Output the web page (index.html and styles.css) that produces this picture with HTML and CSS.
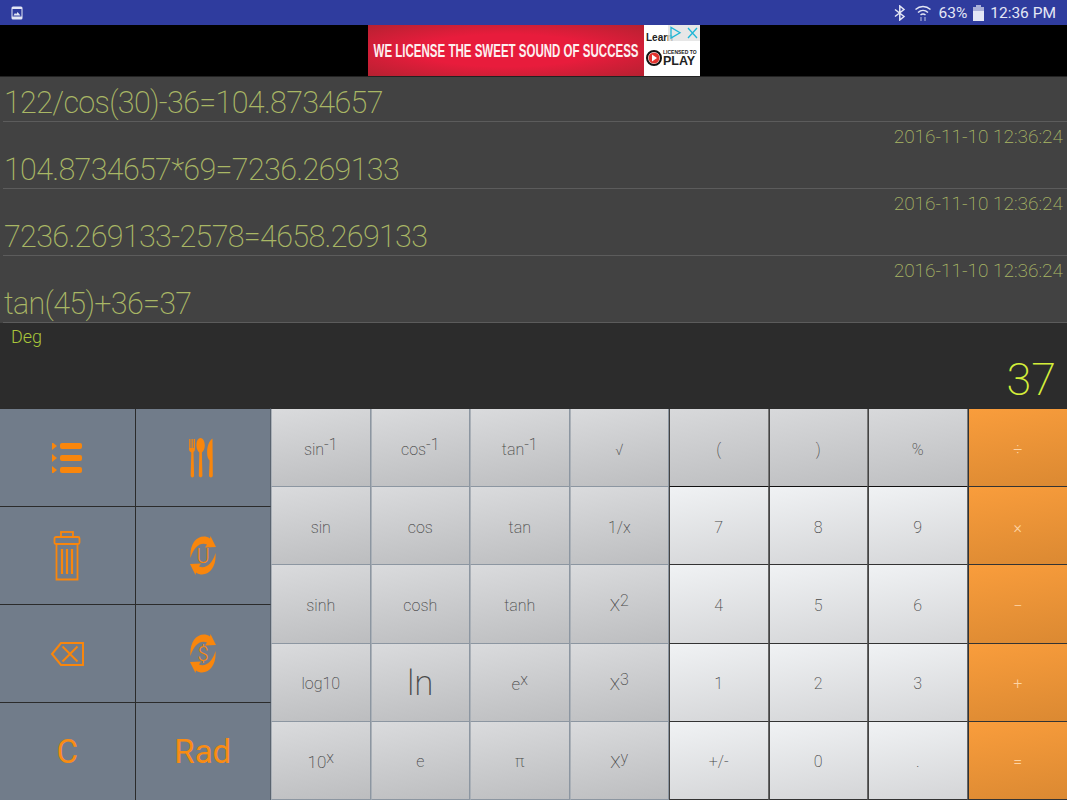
FILE: index.html
```html
<!DOCTYPE html>
<html lang="en">

<head>
    <meta charset="UTF-8">
    <title>Calculator</title>
    <link rel="stylesheet" href="styles.css">
</head>

<body>
    <div id="container">
        <header class="status">
            <svg class="status_pic" width="12" height="14" viewBox="0 0 12 14">
                <rect x="0.5" y="0.5" width="11" height="13" rx="1.5" fill="#e4e7f5"/>
                <rect x="1.5" y="3" width="9" height="7.5" fill="#2f3c9e"/>
                <path d="M2.5 9.5l1.5-2.5 1.2 1.2L6.5 6l3 3.5z" fill="#e4e7f5"/>
            </svg>
            <div class="status_right">
                <svg width="12" height="16" viewBox="0 0 12 16" fill="none" stroke="#e4e7f5" stroke-width="1.5">
                    <path d="M1 4.500l9 7-4.200 3.500v-14l4.200 3.500-9 7"/>
                </svg>
                <svg class="wifi" width="18" height="18" viewBox="0 0 18 18" fill="none" stroke="#e4e7f5" stroke-width="1.5">
                    <path d="M1.500 5.500c4.500-4 10.500-4 15 0M4 8.500c3-2.700 7-2.700 10 0M6.500 11c1.500-1.200 3.500-1.200 5 0"/>
                    <path d="M7 17v-4M11 17v-4" stroke="#8f96cc"/>
                </svg>
                <span class="pct">63%</span>
                <svg width="11" height="16" viewBox="0 0 11 16">
                    <rect x="3" y="0" width="5" height="2" fill="#aab0d8"/>
                    <rect x="0" y="2" width="11" height="5" fill="#aab0d8"/>
                    <rect x="0" y="6" width="11" height="10" fill="#e4e7f5"/>
                </svg>
                <span class="clock">12:36 PM</span>
            </div>
        </header>

        <section class="ad_bar">
            <div class="ad">
                <div class="ad_red"><span>WE LICENSE THE SWEET SOUND OF SUCCESS</span></div>
                <div class="ad_white">
                    <div class="ad_learn">Learn</div>
                    <div class="ad_logo">
                        <svg width="16" height="16" viewBox="0 0 16 16">
                            <circle cx="8" cy="8" r="7" fill="#fff" stroke="#111" stroke-width="2"/>
                            <circle cx="8" cy="8" r="5.500" fill="#e3342f"/>
                            <path d="M6 4.500l5 3.500-5 3.500z" fill="#fff"/>
                        </svg>
                        <div class="ad_play"><small>LICENSED TO</small>PLAY</div>
                    </div>
                </div>
                <div class="ad_choice">
                    <svg width="32" height="16" viewBox="0 0 32 16" fill="none" stroke="#1fb6d6" stroke-width="1.300">
                        <path d="M3 2.500v10.500l9-5.200z"/>
                        <path d="M20 3l9 10M29 3l-9 10"/>
                    </svg>
                </div>
            </div>
        </section>

        <section class="history">
            <div class="entry first">
                <div class="expr">122/cos(30)-36=104.8734657</div>
            </div>
            <div class="entry">
                <div class="stamp">2016-11-10 12:36:24</div>
                <div class="expr">104.8734657*69=7236.269133</div>
            </div>
            <div class="entry">
                <div class="stamp">2016-11-10 12:36:24</div>
                <div class="expr">7236.269133-2578=4658.269133</div>
            </div>
            <div class="entry">
                <div class="stamp">2016-11-10 12:36:24</div>
                <div class="expr">tan(45)+36=37</div>
            </div>
        </section>

        <section class="display">
            <div class="mode">Deg</div>
            <div class="result">37</div>
        </section>

        <section class="keypad">
            <div class="tools">
                <div class="tool">
                    <svg width="30" height="30" viewBox="0 0 30 30" fill="#f9860c">
                        <path d="M0 -1v8l5-4zM0 11v8l5-4zM0 23v8l5-4z"/>
                        <rect x="8" y="0" width="22" height="6" rx="2"/>
                        <rect x="8" y="12" width="22" height="6" rx="2"/>
                        <rect x="8" y="24" width="22" height="6" rx="2"/>
                    </svg>
                </div>
                <div class="tool">
                    <svg class="cutlery" width="24" height="40" viewBox="0 0 24 40" fill="#f9860c">
                        <path d="M0 1h.8v9h.8V1h.8v9h.8V1h.8v9h.8V1H6v10c0 2-1.200 2.500-1.500 3.500l.6 23c0 2.500-3.400 2.500-3.400 0l.6-23C1 13.500 0 13 0 11z"/>
                        <path d="M11.500 0c2.300 0 4.300 3 4.300 7.500 0 3.500-1.700 6-2.900 7l.5 23c0 2.400-3.600 2.400-3.600 0l.5-23c-1.200-1-2.900-3.500-2.900-7C7.400 3 9.200 0 11.500 0z"/>
                        <path d="M23.500 .5l.3 37c0 2.500-3.800 2.500-3.800 0l.6-15c-1.600-1.500-2.500-4-2.500-8 0-6 2-12 5.400-14z"/>
                    </svg>
                </div>
                <div class="tool">
                    <svg width="28" height="50" viewBox="0 0 28 50" fill="none" stroke="#f9860c" stroke-width="1.800">
                        <rect x="8" y="1" width="12" height="5"/>
                        <rect x="1.500" y="6" width="25" height="7" rx="1.500"/>
                        <path d="M3.500 13v35.500h21V13"/>
                        <path d="M9 18v25M14 18v25M19 18v25" stroke-width="2.200"/>
                    </svg>
                </div>
                <div class="tool">
                    <svg class="sync" width="26" height="39" viewBox="0 0 26 39">
                        <path d="M.5 22C-.5 10 5 .5 14 .5c2 0 4 .5 6 2l.5-2.500L26 11l-11 .5 2-3C11 6 4 10 .5 22z"/>
                        <path transform="rotate(180 13 19.500)" d="M.5 22C-.5 10 5 .5 14 .5c2 0 4 .5 6 2l.5-2.500L26 11l-11 .5 2-3C11 6 4 10 .5 22z"/>
                        <text x="13" y="26.500" text-anchor="middle">U</text>
                    </svg>
                </div>
                <div class="tool">
                    <svg width="34" height="26" viewBox="0 0 34 26" fill="none" stroke="#f9860c" stroke-width="2">
                        <path d="M33 2H11L2 13l9 11h22z"/>
                        <path d="M12.500 5.500l15 15M27.500 5.500l-15 15"/>
                    </svg>
                </div>
                <div class="tool">
                    <svg class="sync" width="26" height="39" viewBox="0 0 26 39">
                        <path d="M.5 22C-.5 10 5 .5 14 .5c2 0 4 .5 6 2l.5-2.500L26 11l-11 .5 2-3C11 6 4 10 .5 22z"/>
                        <path transform="rotate(180 13 19.500)" d="M.5 22C-.5 10 5 .5 14 .5c2 0 4 .5 6 2l.5-2.500L26 11l-11 .5 2-3C11 6 4 10 .5 22z"/>
                        <text x="13" y="26.500" text-anchor="middle">$</text>
                    </svg>
                </div>
                <div class="tool tool_text">C</div>
                <div class="tool tool_text">Rad</div>
            </div>
            <div class="keys">
                <div class="key sci">sin<sup>-1</sup></div>
                <div class="key sci">cos<sup>-1</sup></div>
                <div class="key sci">tan<sup>-1</sup></div>
                <div class="key sci">√</div>
                <div class="key par">(</div>
                <div class="key par">)</div>
                <div class="key par">%</div>
                <div class="key op">÷</div>

                <div class="key sci">sin</div>
                <div class="key sci">cos</div>
                <div class="key sci">tan</div>
                <div class="key sci">1/x</div>
                <div class="key num">7</div>
                <div class="key num">8</div>
                <div class="key num">9</div>
                <div class="key op">×</div>

                <div class="key sci">sinh</div>
                <div class="key sci">cosh</div>
                <div class="key sci">tanh</div>
                <div class="key sci big_sup">X<sup>2</sup></div>
                <div class="key num">4</div>
                <div class="key num">5</div>
                <div class="key num">6</div>
                <div class="key op">−</div>

                <div class="key sci">log10</div>
                <div class="key sci ln">ln</div>
                <div class="key sci big_sup">e<sup>x</sup></div>
                <div class="key sci big_sup">X<sup>3</sup></div>
                <div class="key num">1</div>
                <div class="key num">2</div>
                <div class="key num">3</div>
                <div class="key op">+</div>

                <div class="key sci big_sup">10<sup>x</sup></div>
                <div class="key sci">e</div>
                <div class="key sci">π</div>
                <div class="key sci big_sup">X<sup>y</sup></div>
                <div class="key num">+/-</div>
                <div class="key num">0</div>
                <div class="key num">.</div>
                <div class="key op">=</div>
            </div>
        </section>
    </div>
</body>

</html>
```

FILE: styles.css
```css
* {
    margin: 0;
    padding: 0;
    box-sizing: border-box;
}

body {
    font-family: "Roboto", "Liberation Sans", sans-serif;
    background-color: #000;
}

#container {
    width: 1067px;
    height: 800px;
    display: flex;
    flex-direction: column;
    overflow: hidden;
}

.status {
    height: 25px;
    background-color: #2f3c9e;
    color: #e4e7f5;
    display: flex;
    align-items: center;
    justify-content: space-between;
    padding: 0 11px 0 11px;
}

.status_right {
    display: flex;
    align-items: center;
    gap: 6px;
    font-size: 15.5px;
}

.status_right .wifi {
    margin-left: 2px;
}

.ad_bar {
    height: 52px;
    background-color: #000;
    display: flex;
    justify-content: center;
    border-bottom: 1px solid #222;
}

.ad {
    position: relative;
    width: 332px;
    height: 51px;
    margin-left: 1px;
    display: flex;
}

.ad_red {
    width: 276px;
    background: radial-gradient(ellipse at center, #e81c3c 45%, #a8222e 115%);
    display: flex;
    align-items: center;
    justify-content: center;
    padding-top: 2px;
}

.ad_red span {
    flex-shrink: 0;
    color: #fdf0f0;
    font-family: "Liberation Sans", sans-serif;
    font-weight: bold;
    font-size: 18px;
    white-space: nowrap;
    transform: scaleX(0.64);
}

.ad_white {
    width: 56px;
    background-color: #fff;
    color: #222;
    padding: 7px 0 0 2px;
}

.ad_learn {
    font-family: "Liberation Sans", sans-serif;
    font-size: 10px;
    font-weight: bold;
    height: 14px;
}

.ad_logo {
    display: flex;
    align-items: center;
    gap: 1px;
    margin-top: 3px;
}

.ad_play {
    font-family: "Liberation Sans", sans-serif;
    font-weight: bold;
    font-size: 12.5px;
    line-height: 12px;
}

.ad_play small {
    display: block;
    font-size: 5px;
    line-height: 6px;
}

.ad_choice {
    position: absolute;
    top: 0;
    right: 0;
    width: 32px;
    height: 16px;
    background-color: rgba(225, 225, 225, 0.8);
}

.history {
    height: 246px;
    background-color: #424242;
    color: #a9b765;
    font-weight: 200;
    padding-left: 3px;
}

.entry {
    height: 67px;
    border-bottom: 1px solid #5c5c5c;
}

.entry.first {
    height: 45px;
}

.stamp {
    height: 22px;
    line-height: 30px;
    font-size: 19px;
    text-align: right;
    padding-right: 4px;
}

.expr {
    height: 44px;
    line-height: 52px;
    font-size: 30.5px;
    letter-spacing: -0.68px;
    padding-left: 1px;
    white-space: nowrap;
}

.display {
    height: 85px;
    background-color: #2c2c2c;
    display: flex;
    flex-direction: column;
    justify-content: space-between;
    padding: 3px 11px 0;
}

.mode {
    color: #a9c63a;
    font-size: 18px;
    font-weight: 300;
}

.result {
    color: #d3ee3a;
    font-size: 45px;
    font-weight: 200;
    text-align: right;
    line-height: 56px;
}

.keypad {
    flex: 1;
    display: flex;
}

.tools {
    width: 271px;
    display: grid;
    grid-template-columns: 1fr 1fr;
    grid-template-rows: repeat(4, 1fr);
    background-color: #717c8a;
}

.tool {
    display: flex;
    align-items: center;
    justify-content: center;
    border-top: 1px solid #2b2b2b;
    border-right: 1px solid #2b2b2b;
}

.tool:nth-child(even) {
    border-right: 1px solid #59636f;
}

.tool_text {
    color: #f98c12;
    font-size: 33px;
    font-weight: 400;
}

.cutlery {
    margin-right: 4px;
}

.sync path {
    fill: #f9860c;
}

.sync text {
    fill: #f9860c;
    font-size: 20px;
    font-weight: 300;
}

.keys {
    flex: 1;
    display: grid;
    grid-template-columns: repeat(8, 1fr);
    grid-template-rows: repeat(5, 1fr);
    border-top: 1px solid #2b2b2b;
}

.key {
    display: flex;
    align-items: center;
    justify-content: center;
    padding-top: 3px;
    font-size: 16px;
    font-weight: 200;
    color: #4a4a4a;
}

.key sup {
    font-size: 16px;
    line-height: 0;
    position: relative;
    top: -4px;
}

.big_sup {
    font-size: 17px;
}

.ln {
    font-size: 35px;
}

.sci {
    background: linear-gradient(170deg, #dadbdd, #bcbdbf);
    border-bottom: 1px solid #8c96a1;
    border-right: 1px solid #8c96a1;
    border-left: 1px solid #aab0b7;
}

.par {
    background: linear-gradient(170deg, #d8d9db, #bdbec0);
    border-bottom: 1px solid #111;
    border-left: 1px solid #444;
    border-right: 1px solid #777;
}

.num {
    background: linear-gradient(170deg, #f0f2f4, #d4d5d7);
    border-bottom: 1px solid #333;
    border-left: 1px solid #444;
    border-right: 1px solid #666;
}

.op {
    background: linear-gradient(170deg, #f99d3c, #db8932);
    color: #fdd5a5;
    font-weight: 300;
    border-bottom: 1px solid #333;
    border-left: 1px solid #333;
}
```
